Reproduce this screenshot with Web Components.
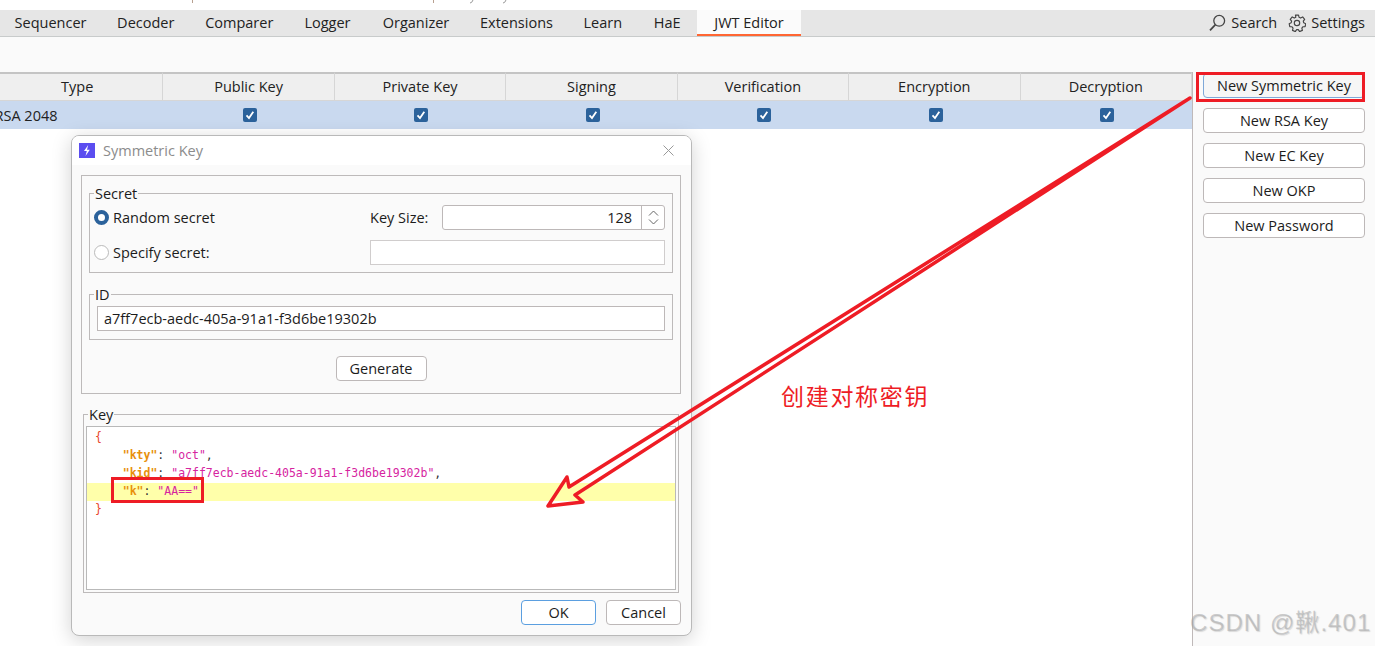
<!DOCTYPE html>
<html>
<head>
<meta charset="utf-8">
<style>
    html,body{margin:0;padding:0;height:100%;overflow:hidden;background:#fff;}
    body{font-family:"Open Sans","Noto Sans",sans-serif;font-size:14.5px;color:#1c1c1c;}
</style>
</head>
<body>
<jwt-app></jwt-app>
<script>
class TopNav extends HTMLElement{
    constructor(){
        super();
        this.attachShadow({mode:'open'});
        const tabs = [['Sequencer',101],['Decoder',89.5],['Comparer',97.5],['Logger',79],['Organizer',98],['Extensions',103],['Learn',69.5],['HaE',59.5],['JWT Editor',104]];
        this.shadowRoot.innerHTML = `
        <style>
            :host{display:flex;height:27px;box-sizing:border-box;background:#e6e6e6;border-bottom:1px solid #c8cbcb;font-size:14.5px;color:#222;}
            .tab{display:flex;align-items:center;justify-content:center;box-sizing:border-box;height:26px;white-space:nowrap;padding-bottom:1px;}
            .tab:first-child{padding-right:2px;}
            .tab.on{background:#fbfbfb;border-bottom:2px solid #ff6633;padding-bottom:0;}
            .right{margin-left:auto;display:flex;align-items:center;gap:11px;padding-right:10px;padding-bottom:1px;}
            .item{display:flex;align-items:center;gap:5px;}
            svg{display:block;}
        </style>
        ${tabs.map(t=>`<div class="tab ${t[0]=='JWT Editor'?'on':''}" style="width:${t[1]}px">${t[0]}</div>`).join('')}
        <div class="right">
            <div class="item">
                <svg width="17" height="17" viewBox="0 0 17 17" fill="none" stroke="#444" stroke-width="1.3"><circle cx="10.2" cy="6.8" r="5.4"/><path d="M6.400 10.700 1 16.300" stroke-width="1.700"/></svg>
                <span>Search</span>
            </div>
            <div class="item">
                <svg width="18" height="18" viewBox="0 0 20 20" fill="none" stroke="#444" stroke-width="1.3" stroke-linejoin="round"><circle cx="10" cy="10" r="3"/><path d="M8.300 1.200h3.400l.6 2.500 1.700.8 2.300-1.200 2.200 2.600-1.500 2.100.5 1.800 2.200 1-.7 3.200-2.500.2-1.100 1.500.6 2.500-3.100 1.300-1.500-2.100h-1.800l-1.500 2.100-3.100-1.300.6-2.500-1.100-1.500-2.500-.2-.7-3.200 2.200-1 .5-1.800-1.500-2.100 2.200-2.600 2.300 1.200 1.700-.8z"/></svg>
                <span>Settings</span>
            </div>
        </div>`;
    }
}
customElements.define('top-nav',TopNav);

class KeyTable extends HTMLElement{
    constructor(){
        super();
        this.attachShadow({mode:'open'});
        const cols = ['Type','Public Key','Private Key','Signing','Verification','Encryption','Decryption'];
        const check = `<svg width="14" height="14" viewBox="0 0 14 14"><rect width="14" height="14" rx="2" fill="#2b629b"/><path d="M3.500 7.300 6 10l4.300-6.200" fill="none" stroke="#fff" stroke-width="1.800"/></svg>`;
        this.shadowRoot.innerHTML = `
        <style>
            :host{display:block;flex:1;min-width:0;overflow:hidden;background:#fff;font-size:14.5px;color:#222;}
            .grid{display:grid;grid-template-columns:repeat(7,171.43px);margin-left:-8px;}
            .h{height:29px;box-sizing:border-box;background:#efefef;border-top:2px solid #c4c4c4;border-bottom:1px solid #d6d6d6;border-right:1px solid #d6d6d6;display:flex;align-items:center;justify-content:center;padding-bottom:1px;}
            .c{height:28px;background:#c9d9ef;display:flex;align-items:center;justify-content:center;box-sizing:border-box;padding-left:1.500px;}
            .c.first{justify-content:flex-start;padding-left:2.500px;white-space:nowrap;}
        </style>
        <div class="grid">
            ${cols.map(c=>`<div class="h">${c}</div>`).join('')}
            <div class="c first">RSA 2048</div>
            ${cols.slice(1).map(()=>`<div class="c">${check}</div>`).join('')}
        </div>`;
    }
}
customElements.define('key-table',KeyTable);

class SideButton extends HTMLElement{
    constructor(){
        super();
        this.attachShadow({mode:'open'});
        this.shadowRoot.innerHTML = `
        <style>
            :host{display:flex;height:25px;box-sizing:border-box;align-items:center;justify-content:center;background:#fff;border:1px solid #bdb8b8;border-radius:4px;font-size:14.5px;color:#1c1c1c;white-space:nowrap;padding-bottom:1px;}
            :host([focus]){background:#f6f6f6;border-color:#7fa8d8;}
            :host([ok]){border-color:#5b9fe0;}
        </style>
        <slot></slot>`;
    }
}
customElements.define('side-button',SideButton);

class KeySidebar extends HTMLElement{
    constructor(){
        super();
        this.attachShadow({mode:'open'});
        this.shadowRoot.innerHTML = `
        <style>
            :host{display:flex;flex-direction:column;width:183px;box-sizing:border-box;background:#fafafa;border-left:1px solid #bfb9b9;padding:1px 10px 0 10px;gap:10px;}
        </style>
        <slot></slot>`;
    }
}
customElements.define('key-sidebar',KeySidebar);

class GroupBox extends HTMLElement{
    constructor(){
        super();
        this.attachShadow({mode:'open'});
        this.shadowRoot.innerHTML = `
        <style>
            :host{display:block;font-size:14.5px;color:#1c1c1c;}
            fieldset{margin:0;border:1px solid #bdbaba;padding:0;height:100%;box-sizing:border-box;min-width:0;}
            legend{padding:0 1px;margin-left:4px;line-height:17px;height:17px;}
        </style>
        <fieldset><legend>${this.getAttribute('label')}</legend><slot></slot></fieldset>`;
    }
}
customElements.define('group-box',GroupBox);

class KeyDialog extends HTMLElement{
    constructor(){
        super();
        this.attachShadow({mode:'open'});
        this.shadowRoot.innerHTML = `
        <style>
            :host{position:absolute;left:71px;top:135px;width:621px;height:501px;box-sizing:border-box;background:#fafafa;border:1px solid #b9b9b9;border-radius:8px;box-shadow:0 4px 20px rgba(0,0,0,.18);display:flex;flex-direction:column;font-size:14.5px;color:#1c1c1c;overflow:hidden;}
            .title{height:29px;background:#fff;display:flex;align-items:center;padding:0 17px 0 7px;color:#8c8c8c;flex:none;}
            .title svg{display:block;}
            .title span{margin-left:8px;}
            .x{margin-left:auto;}
            .body{flex:1;display:flex;flex-direction:column;padding:10px 10px 9px 9px;min-height:0;}
            .outer{height:219px;box-sizing:border-box;border:1px solid #bdbaba;padding:9px 7px 0 7px;flex:none;display:flex;flex-direction:column;}
            group-box.secret{height:88px;flex:none;}
            .row{display:flex;align-items:center;height:25px;padding-left:4px;}
            .row:first-of-type{margin-top:3px;}
            .row+.row{margin-top:10px;}
            .radio{width:15px;height:15px;border-radius:50%;box-sizing:border-box;border:1px solid #b9b9b9;background:#fff;flex:none;margin-right:4px;}
            .radio.on{border:4px solid #2b629b;}
            .lab{width:257px;white-space:nowrap;flex:none;}
            .lab2{width:72px;white-space:nowrap;flex:none;}
            .field{box-sizing:border-box;height:25px;border:1px solid #bdb8b8;background:#fff;flex:1;margin-right:7px;min-width:0;display:flex;align-items:center;}
            .spin{border-radius:3px;justify-content:flex-end;}
            .num{padding-right:9px;}
            .arrows{width:23px;height:100%;box-sizing:border-box;border-left:1px solid #bdb8b8;display:flex;align-items:center;justify-content:center;}
            .empty{border-color:#d0cdcd;}
            group-box.id{height:54px;flex:none;margin-top:13px;}
            .id-field{margin:3px 7px 0 7px;padding-left:6px;height:25px;}
            .gen{display:flex;justify-content:center;margin-top:16px;}
            .gen side-button{width:91px;}
            group-box.key{margin:12px 2px 0 2px;height:187px;flex:none;}
            .code{margin:3px 2px 2px 2px;height:164px;background:#fff;border:1px solid #b9b9b9;box-sizing:border-box;font:11.500px/17px "DejaVu Sans Mono","Liberation Mono",monospace;padding:2px 0 0 0;white-space:pre;}
            .line{padding-left:8px;height:18px;margin-right:0;}
            .line.hl{background:#ffffaa;}
            .b{color:#e8452c;}
            .k{color:#e8900c;font-weight:bold;}
            .p{color:#333;}
            .s{color:#d6249f;}
            .foot{display:flex;justify-content:flex-end;gap:10px;margin-top:7px;flex:none;}
            .foot side-button{width:75px;}
        </style>
        <div class="title">
            <svg width="16" height="15" viewBox="0 0 16 15"><rect width="16" height="15" fill="#5b4df0"/><path d="M9.200 2 5 8h2.800L6.500 13 10.800 6.800H8z" fill="#fff"/></svg>
            <span>Symmetric Key</span>
            <svg class="x" width="11" height="11" viewBox="0 0 11 11" fill="none" stroke="#999" stroke-width="1"><path d="M.5.500 10.500 10.500M10.500.500.500 10.500"/></svg>
        </div>
        <div class="body">
            <div class="outer">
                <group-box class="secret" label="Secret">
                    <div class="row"><span class="radio on"></span><span class="lab">Random secret</span><span class="lab2">Key Size:</span>
                        <div class="field spin"><span class="num">128</span><span class="arrows"><svg width="11" height="15" viewBox="0 0 11 15" fill="none" stroke="#666"><path d="M1 5.500 5.500 1 10 5.500M1 9.500 5.500 14 10 9.500"/></svg></span></div>
                    </div>
                    <div class="row"><span class="radio"></span><span class="lab">Specify secret:</span><div class="field empty"></div></div>
                </group-box>
                <group-box class="id" label="ID">
                    <div class="field id-field">a7ff7ecb-aedc-405a-91a1-f3d6be19302b</div>
                </group-box>
                <div class="gen"><side-button>Generate</side-button></div>
            </div>
            <group-box class="key" label="Key">
                <div class="code"><div class="line"><span class="b">{</span></div><div class="line">    <span class="k">"kty"</span><span class="p">:</span> <span class="s">"oct"</span><span class="p">,</span></div><div class="line">    <span class="k">"kid"</span><span class="p">:</span> <span class="s">"a7ff7ecb-aedc-405a-91a1-f3d6be19302b"</span><span class="p">,</span></div><div class="line hl">    <span class="k">"k"</span><span class="p">:</span> <span class="s">"AA=="</span></div><div class="line"><span class="b">}</span></div></div>
            </group-box>
            <div class="foot"><side-button ok>OK</side-button><side-button>Cancel</side-button></div>
        </div>`;
    }
}
customElements.define('key-dialog',KeyDialog);

class RedMarks extends HTMLElement{
    constructor(){
        super();
        this.attachShadow({mode:'open'});
        this.shadowRoot.innerHTML = `
        <style>
            :host{position:absolute;left:0;top:0;width:1375px;height:646px;pointer-events:none;}
            svg{position:absolute;left:0;top:0;}
            .note{position:absolute;left:781px;top:379px;font:23px/32px "Noto Sans CJK SC",sans-serif;letter-spacing:1.700px;color:#ee1c25;white-space:nowrap;}
            .mark{position:absolute;left:1190px;top:606px;font:24px/34px "Liberation Sans","Noto Sans CJK SC",sans-serif;letter-spacing:1.050px;color:rgba(165,165,165,.55);text-shadow:1px 1px 1px rgba(120,120,120,.25);white-space:nowrap;}
        </style>
        <svg width="1375" height="646" fill="none" stroke="#ee1c25">
            <rect x="1197.500" y="73.500" width="166" height="27" stroke-width="3"/>
            <rect x="112.500" y="478.500" width="90" height="23" stroke-width="3"/>
            <path d="M1190 98 569 487 567 477 548 506 583 502 575 495z" stroke-width="3.500" stroke-linejoin="round"/>
        </svg>
        <div class="note">创建对称密钥</div>
        <div class="mark">CSDN @鞦.401</div>`;
    }
}
customElements.define('red-marks',RedMarks);

class JwtApp extends HTMLElement{
    constructor(){
        super();
        this.attachShadow({mode:'open'});
        this.shadowRoot.innerHTML = `
        <style>
            :host{display:flex;flex-direction:column;height:646px;width:1375px;position:relative;overflow:hidden;background:#fff;}
            .clip{height:10px;flex:none;background:#fff;}
            .clip svg{display:block;}
            .bar{height:35px;background:#fafafa;flex:none;}
            .main{flex:1;display:flex;min-height:0;}
        </style>
        <div class="clip">
            <svg width="1375" height="10" fill="none" stroke="#b8a090"><path d="M192.500 0v3M433.500 0v3"/><path d="M473 0q-1 3-3 3M506 0q-1 3-3 3" stroke="#999"/></svg>
        </div>
        <top-nav></top-nav>
        <div class="bar"></div>
        <div class="main">
            <key-table></key-table>
            <key-sidebar>
                <side-button focus>New Symmetric Key</side-button>
                <side-button>New RSA Key</side-button>
                <side-button>New EC Key</side-button>
                <side-button>New OKP</side-button>
                <side-button>New Password</side-button>
            </key-sidebar>
        </div>
        <key-dialog></key-dialog>
        <red-marks></red-marks>`;
    }
}
customElements.define('jwt-app',JwtApp);
</script>
</body>
</html>
